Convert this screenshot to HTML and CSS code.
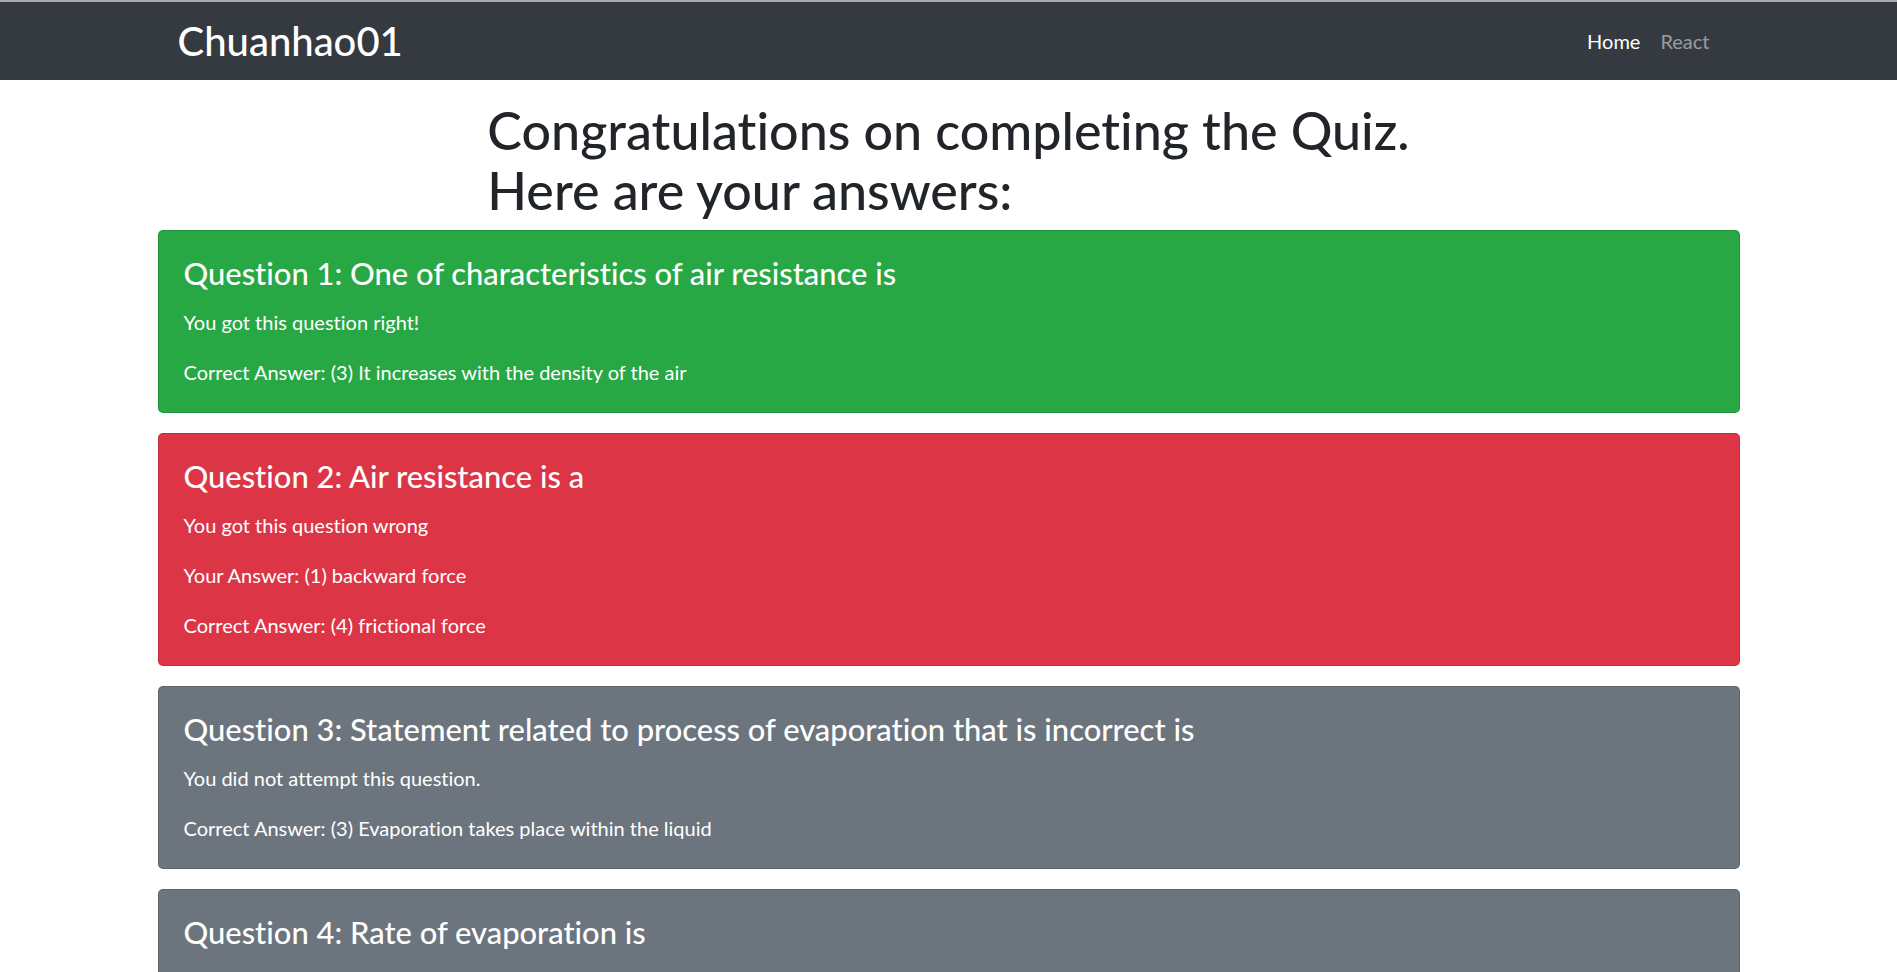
FILE: index.html
```html
<!DOCTYPE html>
<html lang="en">
<head>
<meta charset="utf-8">
<title>Chuanhao01 Quiz</title>
<link rel="stylesheet" href="styles.css">
</head>
<body>
<nav class="navbar">
  <div class="navbar-inner">
    <a class="brand" href="#">Chuanhao01</a>
    <ul class="nav-links">
      <li><a class="nav-link active" href="#">Home</a></li>
      <li><a class="nav-link" href="#">React</a></li>
    </ul>
  </div>
</nav>
<main class="container">
  <div class="heading-wrap">
    <h1 class="page-title">Congratulations on completing the Quiz.<br>Here are your answers:</h1>
  </div>
  <section class="card card-success">
    <h4 class="card-title">Question 1: One of characteristics of air resistance is</h4>
    <p class="card-text">You got this question right!</p>
    <p class="card-text">Correct Answer: (3) It increases with the density of the air</p>
  </section>
  <section class="card card-danger">
    <h4 class="card-title">Question 2: Air resistance is a</h4>
    <p class="card-text">You got this question wrong</p>
    <p class="card-text">Your Answer: (1) backward force</p>
    <p class="card-text">Correct Answer: (4) frictional force</p>
  </section>
  <section class="card card-secondary">
    <h4 class="card-title">Question 3: Statement related to process of evaporation that is incorrect is</h4>
    <p class="card-text">You did not attempt this question.</p>
    <p class="card-text">Correct Answer: (3) Evaporation takes place within the liquid</p>
  </section>
  <section class="card card-secondary">
    <h4 class="card-title">Question 4: Rate of evaporation is</h4>
    <p class="card-text">You did not attempt this question.</p>
    <p class="card-text">Correct Answer: (2) directly proportional to the surface area of the liquid</p>
  </section>
</main>
</body>
</html>
```
FILE: styles.css
```css
* { box-sizing: border-box; }

html, body {
  margin: 0;
  padding: 0;
}

body {
  font-family: "Lato", "Liberation Sans", sans-serif;
  font-size: 20px;
  line-height: 1.5;
  color: #212529;
  background: #fff;
  border-top: 2px solid #a9abad;
  font-variant-ligatures: no-common-ligatures;
}

.navbar {
  background: #343a40;
  height: 78px;
}

.navbar-inner {
  width: 1582px;
  margin: 0 auto;
  height: 100%;
  padding: 0 20px;
  display: flex;
  align-items: center;
  justify-content: space-between;
}

.brand {
  color: #fff;
  text-decoration: none;
  font-size: 40px;
  font-weight: 500;
  line-height: 48px;
}

.nav-links {
  list-style: none;
  margin: 0;
  padding: 0;
  display: flex;
}

.nav-link {
  display: block;
  padding: 10px;
  font-size: 20px;
  line-height: 30px;
  color: rgba(255, 255, 255, 0.5);
  text-decoration: none;
}

.nav-link.active {
  color: #fff;
}

.container {
  width: 1582px;
  margin: 0 auto;
  padding-top: 20px;
}

.heading-wrap {
  display: flex;
  justify-content: center;
}

.page-title {
  margin: 0 0 10px;
  font-size: 52px;
  line-height: 60px;
  font-weight: 500;
  color: #212529;
}

.card {
  border: 1px solid rgba(0, 0, 0, 0.125);
  border-radius: 5px;
  padding: 25px;
  margin-bottom: 20px;
  color: #fff;
}

.card-success { background: #28a745; }
.card-danger { background: #dc3545; }
.card-secondary { background: #6c757d; }

.card-title {
  margin: 0 0 15px;
  font-size: 30.9px;
  line-height: 36px;
  font-weight: 500;
}

.card-text {
  margin: 0 0 20px;
}

.card-text:last-child {
  margin-bottom: 0;
}
```
